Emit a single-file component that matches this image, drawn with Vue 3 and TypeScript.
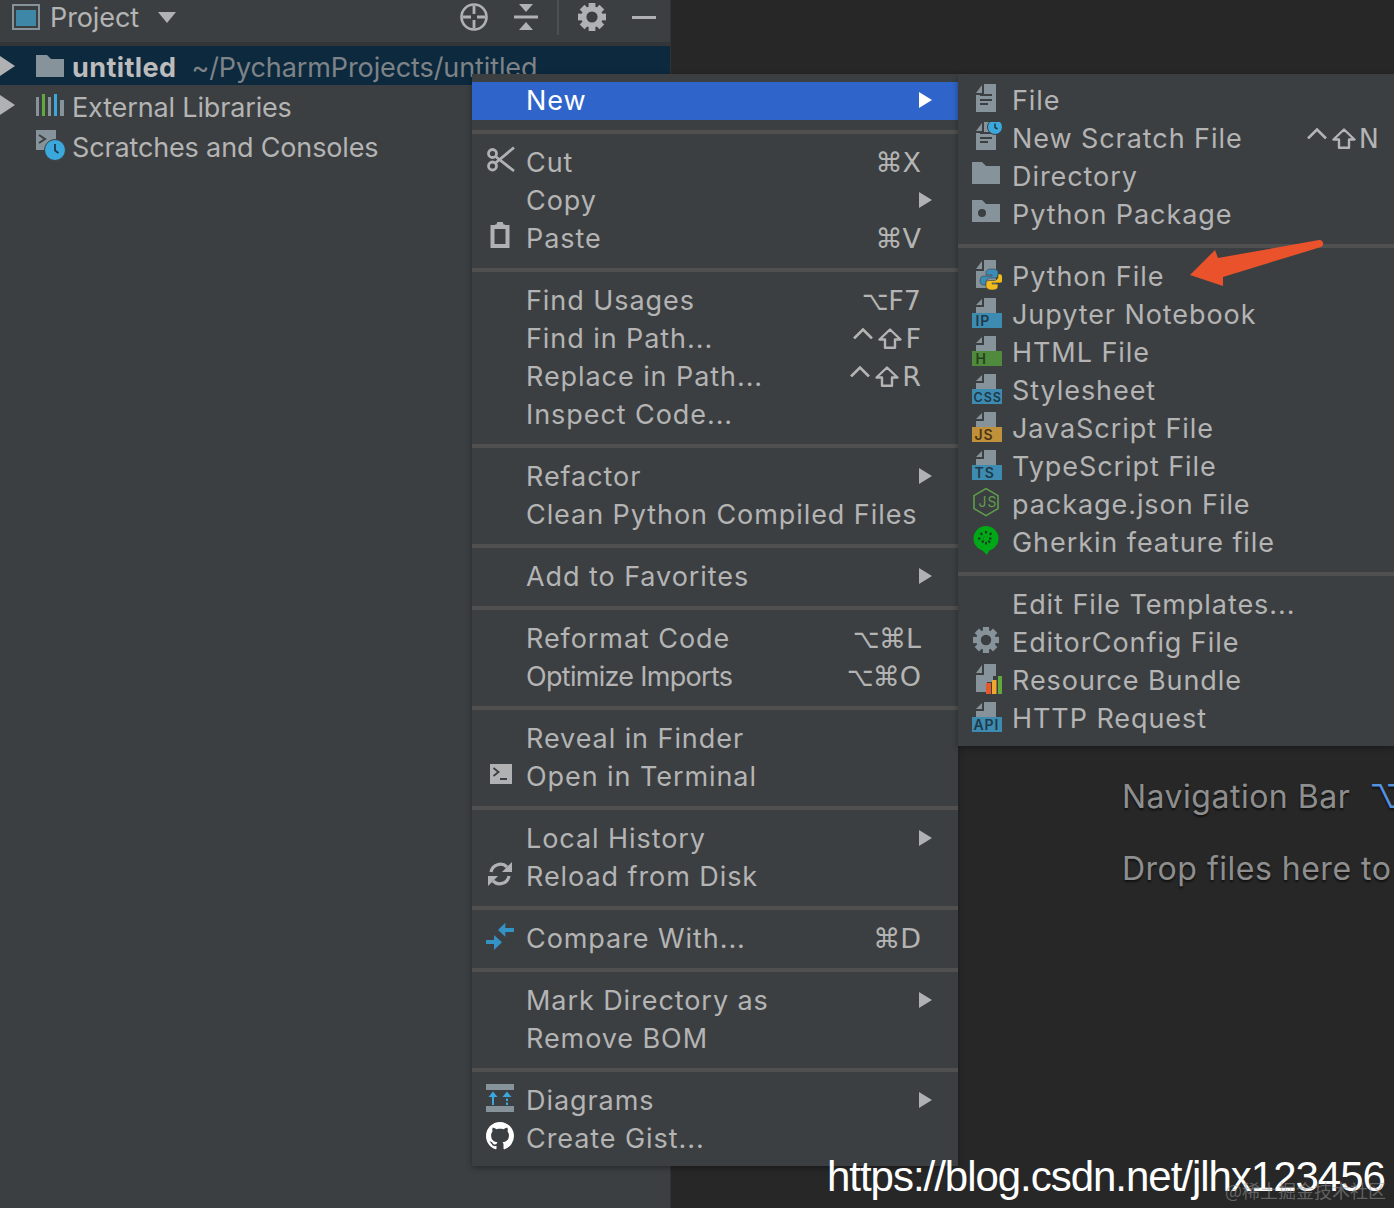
<script setup lang="ts">
interface Item { label: string; icon?: string; key?: string; sub?: boolean; active?: boolean; tight?: boolean }

const fileBody = '<path d="M12 1v8H6z" fill="#87939a"/><path d="M14 0h12v28H6V11h8z" fill="#87939a"/>'
const fileShort = '<path d="M12 1v6H6z" fill="#87939a"/><path d="M14 0h12v15H6v-6h8z" fill="#87939a"/>'
const fileLines = '<path d="M10 11h12M10 16h12M10 20h8" stroke="#3c3f41" stroke-width="2" fill="none"/>'
const badge = (color: string, text: string, x: number, size = 14, ink = '#1f3a4a') =>
  fileShort +
  `<rect x="2" y="15" width="30" height="15" fill="${color}"/><text x="${x}" y="28" font-family="Inter, sans-serif" font-weight="600" font-size="${size}" fill="${ink}">${text}</text>`
const folder = '<path d="M2 2h10l4 4h14v18H2z" fill="#87939a"/>'
const gear = (cx: number, cy: number, r: number, color: string, hole: string) => {
  let teeth = ''
  for (let a = 0; a < 360; a += 45) {
    teeth += `<rect x="${cx - r * 0.24}" y="${cy - r}" width="${r * 0.48}" height="${r * 0.5}" fill="${color}" transform="rotate(${a} ${cx} ${cy})"/>`
  }
  return teeth + `<circle cx="${cx}" cy="${cy}" r="${r * 0.58}" fill="none" stroke="${color}" stroke-width="${r * 0.36}"/><circle cx="${cx}" cy="${cy}" r="${r * 0.34}" fill="${hole}"/>`
}

const icons: Record<string, string> = {
  cut: '<g fill="none" stroke="#afb1b3" stroke-width="2.800"><circle cx="8.500" cy="7.500" r="4"/><circle cx="8.500" cy="20" r="4"/><path d="M11.500 10.500L30 25M11.500 17L30 1.500"/></g>',
  paste: '<path d="M11 3.500h2l1-2.500h4l1 2.500h2" fill="#afb1b3" stroke="#afb1b3" stroke-width="2"/><path d="M8.500 5h15v19h-15z" fill="none" stroke="#afb1b3" stroke-width="4"/>',
  terminal: '<rect x="6" y="4" width="22" height="20" fill="#afb1b3"/><path d="M9.500 8l5 4-5 4M16 19h7" fill="none" stroke="#3c3f41" stroke-width="1.800"/>',
  reload: '<g fill="none" stroke="#afb1b3" stroke-width="3.200"><path d="M7 12a9.500 9.500 0 0 1 16-5"/><path d="M25 16a9.500 9.500 0 0 1-16 5"/></g><path d="M28 2v10H18zM4 26V16h10z" fill="#afb1b3"/>',
  compare: '<g fill="#3592c4"><path d="M21.300.7v14L14 8z"/><path d="M21 6h9v4h-9z"/><path d="M10 13v15l8-7.700z"/><path d="M2 18h8v4H2z"/></g>',
  diagrams: '<path d="M2 0h28v6H2zM2 22h28v6H2z" fill="#87939a"/><path d="M9 21V11" stroke="#3aa8dc" stroke-width="2"/><path d="M4.500 13L9 7.500l4.500 5.500z" fill="#3aa8dc"/><path d="M23 21v-9" stroke="#3aa8dc" stroke-width="2" stroke-dasharray="2.500 1.500"/><path d="M18.500 13L23 7.500l4.500 5.500z" fill="#3aa8dc"/>',
  github: '<path transform="translate(2 0) scale(1.75)" fill="#fff" d="M8 0C3.58 0 0 3.58 0 8c0 3.54 2.29 6.53 5.47 7.59.4.07.55-.17.55-.38 0-.19-.01-.82-.01-1.49-2.01.37-2.53-.49-2.69-.94-.09-.23-.48-.94-.82-1.13-.28-.15-.68-.52-.01-.53.63-.01 1.08.58 1.23.82.72 1.21 1.87.87 2.33.66.07-.52.28-.87.51-1.07-1.78-.2-3.64-.89-3.64-3.95 0-.87.31-1.59.82-2.15-.08-.2-.36-1.02.08-2.12 0 0 .67-.21 2.2.82.64-.18 1.32-.27 2-.27.68 0 1.36.09 2 .27 1.53-1.04 2.2-.82 2.2-.82.44 1.1.16 1.92.08 2.12.51.56.82 1.27.82 2.15 0 3.07-1.87 3.75-3.65 3.95.29.25.54.73.54 1.48 0 1.07-.01 1.93-.01 2.2 0 .21.15.46.55.38A8.013 8.013 0 0016 8c0-4.420-3.580-8-8-8z"/>',
  file: fileBody + fileLines,
  scratch: fileBody + fileLines + '<circle cx="25" cy="5" r="7.500" fill="#3aa8dc" stroke="#3c3f41" stroke-width="1"/><path d="M25 1.500V5.500l2.500 1.500" fill="none" stroke="#21384a" stroke-width="1.500"/>',
  folder,
  package: folder + '<circle cx="12" cy="15" r="4" fill="#3c3f41"/>',
  python: fileBody + '<path d="M22 9c-4 0-6 1-6 4v2h6v1h-8c-3 0-4 2-4 5s2 4 4 4h2v-3c0-2 2-4 4-4h5c2 0 3-1 3-3v-3c0-2-2-3-6-3z" fill="#3c8cb8" stroke="#3c3f41" stroke-width=".6"/><path d="M22 30c4 0 6-1 6-4v-2h-6v-1h8c2 0 3-2 3-4.500S31.500 14 29.500 14H28v3c0 2-2 3.500-4 3.500h-5c-2 0-3 1-3 3V26c0 2 2 4 6 4z" fill="#f0bb1b" stroke="#3c3f41" stroke-width=".6"/>',
  ipynb: badge('#3d8bb0', 'IP', 5.500),
  html: badge('#4f8a3d', 'H', 5.500, 14, '#24421c'),
  css: badge('#3d8bb0', 'CSS', 3.500, 12.500),
  js: badge('#c0903a', 'JS', 4.500, 14, '#4a3513'),
  ts: badge('#3d8bb0', 'TS', 4.500),
  pkg: '<path d="M16 .6l12 7v13l-12 7-12-7v-13z" fill="none" stroke="#5f9c4c" stroke-width="1.600"/><text x="8.500" y="19" font-family="Inter, sans-serif" font-size="14" fill="#5f9c4c">JS</text>',
  gherkin: '<circle cx="16" cy="12.500" r="12.500" fill="#00a818"/><path d="M11 23l6 6 3-6z" fill="#00a818"/><g stroke="#1c3b20" stroke-width="2" stroke-dasharray="2.500 3"><path d="M16 5v16M8 12.500h16M10.500 7l11 11M21.500 7l-11 11"/></g><circle cx="16" cy="12.500" r="2.500" fill="#00a818"/>',
  config: gear(16, 14, 13, '#87939a', '#3c3f41'),
  bundle: '<path d="M12 1v8H6z" fill="#87939a"/><path d="M14 0h12v12h-3v6h-6v10H6V11h8z" fill="#87939a"/><path d="M16 19h5v11h-5z" fill="#e6572a"/><path d="M22 16h4.500v14H22z" fill="#f0a732"/><path d="M28 12h4v18h-4z" fill="#62a83c"/>',
  api: badge('#3d8bb0', 'API', 3.500, 14),
}

const mainGroups: Item[][] = [
  [{ label: 'New', sub: true, active: true }],
  [
    { label: 'Cut', icon: 'cut', key: '⌘X' },
    { label: 'Copy', sub: true },
    { label: 'Paste', icon: 'paste', key: '⌘V' },
  ],
  [
    { label: 'Find Usages', key: '⌥F7' },
    { label: 'Find in Path...', key: '⌃⇧F' },
    { label: 'Replace in Path...', key: '⌃⇧R' },
    { label: 'Inspect Code...' },
  ],
  [{ label: 'Refactor', sub: true }, { label: 'Clean Python Compiled Files' }],
  [{ label: 'Add to Favorites', sub: true }],
  [
    { label: 'Reformat Code', key: '⌥⌘L' },
    { label: 'Optimize Imports', key: '⌥⌘O', tight: true },
  ],
  [{ label: 'Reveal in Finder' }, { label: 'Open in Terminal', icon: 'terminal' }],
  [{ label: 'Local History', sub: true }, { label: 'Reload from Disk', icon: 'reload' }],
  [{ label: 'Compare With...', icon: 'compare', key: '⌘D' }],
  [{ label: 'Mark Directory as', sub: true }, { label: 'Remove BOM' }],
  [
    { label: 'Diagrams', icon: 'diagrams', sub: true },
    { label: 'Create Gist...', icon: 'github' },
  ],
]

const subGroups: Item[][] = [
  [
    { label: 'File', icon: 'file' },
    { label: 'New Scratch File', icon: 'scratch', key: '⌃⇧N' },
    { label: 'Directory', icon: 'folder' },
    { label: 'Python Package', icon: 'package' },
  ],
  [
    { label: 'Python File', icon: 'python' },
    { label: 'Jupyter Notebook', icon: 'ipynb' },
    { label: 'HTML File', icon: 'html' },
    { label: 'Stylesheet', icon: 'css' },
    { label: 'JavaScript File', icon: 'js' },
    { label: 'TypeScript File', icon: 'ts' },
    { label: 'package.json File', icon: 'pkg' },
    { label: 'Gherkin feature file', icon: 'gherkin' },
  ],
  [
    { label: 'Edit File Templates...' },
    { label: 'EditorConfig File', icon: 'config' },
    { label: 'Resource Bundle', icon: 'bundle' },
    { label: 'HTTP Request', icon: 'api' },
  ],
]

const menus = [
  { name: 'main', groups: mainGroups },
  { name: 'sub', groups: subGroups },
]
const headerGear = gear(592, 15, 14, '#afb1b3', '#3c3f41')
</script>

<template>
  <div class="root">
    <aside class="panel">
      <header class="bar">
        <svg class="project-icon" width="28" height="26" viewBox="0 0 28 26">
          <rect x="1" y="1" width="26" height="24" fill="none" stroke="#87939a" stroke-width="2" />
          <rect x="4" y="6" width="20" height="16" fill="#3f87a6" />
        </svg>
        <span class="bar-title">Project</span>
        <svg class="caret" width="18" height="11" viewBox="0 0 18 11"><path d="M0 0h18L9 11z" fill="#afb1b3" /></svg>
        <span class="bar-space"></span>
        <svg class="tool" width="30" height="30" viewBox="0 0 30 30">
          <circle cx="15" cy="15" r="12.500" fill="none" stroke="#afb1b3" stroke-width="2.600" />
          <path d="M15 4v8M15 18v8M4 15h8M18 15h8" stroke="#afb1b3" stroke-width="2.800" />
        </svg>
        <svg class="tool collapse" width="24" height="28" viewBox="0 0 24 28">
          <path d="M5 1h14l-7 8zM5 27h14l-7-8z" fill="#afb1b3" />
          <path d="M0 14h24" stroke="#afb1b3" stroke-width="3" />
        </svg>
        <span class="bar-divider"></span>
        <svg class="tool gear" width="30" height="30" viewBox="577 0 30 30" v-html="headerGear"></svg>
        <span class="minus"></span>
      </header>
      <div class="tree">
        <div class="tree-row selected">
          <svg class="twist" width="15" height="20" viewBox="0 0 15 20"><path d="M0 0l15 10L0 20z" fill="#afb1b3" /></svg>
          <svg class="node-icon" width="28" height="22" viewBox="0 0 28 22"><path d="M0 0h11l4 4h13v18H0z" fill="#87939a" /></svg>
          <span class="node-bold">untitled</span>
          <span class="node-path">~/PycharmProjects/untitled</span>
        </div>
        <div class="tree-row">
          <svg class="twist" width="15" height="20" viewBox="0 0 15 20"><path d="M0 0l15 10L0 20z" fill="#afb1b3" /></svg>
          <svg class="node-icon" width="28" height="22" viewBox="0 0 28 22">
            <path d="M0 3h3v19H0z" fill="#87939a" />
            <path d="M6 0h3v22H6z" fill="#62a83c" />
            <path d="M12 3h3v19h-3z" fill="#87939a" />
            <path d="M18 0h3v22h-3z" fill="#3aa8dc" />
            <path d="M24 6h4v16h-4z" fill="#87939a" />
          </svg>
          <span class="node-text">External Libraries</span>
        </div>
        <div class="tree-row">
          <span class="twist-space"></span>
          <svg class="node-icon scratch" width="30" height="32" viewBox="0 0 30 32">
            <path d="M0 0h20v20H0z" fill="#87939a" />
            <path d="M3 5l6 4-6 4" fill="none" stroke="#3c3f41" stroke-width="2" />
            <circle cx="19" cy="20" r="10.500" fill="#3aa8dc" stroke="#3c3f41" stroke-width="1" />
            <path d="M19 14v6.500l3.500 2.500" fill="none" stroke="#21384a" stroke-width="1.800" />
          </svg>
          <span class="node-text">Scratches and Consoles</span>
        </div>
      </div>
    </aside>

    <main class="editor">
      <p class="hint">Navigation Bar<span class="hint-key">⌥</span></p>
      <p class="hint">Drop files here to</p>
    </main>

    <div v-for="menu in menus" :key="menu.name" class="menu" :class="menu.name">
      <template v-for="(group, g) in menu.groups" :key="g">
        <div v-if="g > 0" class="sep"></div>
        <div v-for="item in group" :key="item.label" class="row" :class="{ active: item.active }">
          <svg v-if="item.icon" class="row-icon" width="32" height="32" viewBox="0 0 32 32" v-html="icons[item.icon]"></svg>
          <span v-else class="row-icon"></span>
          <span class="row-label" :class="{ tight: item.tight }">{{ item.label }}</span>
          <span v-if="item.key" class="row-key">
            <template v-for="(c, i) in item.key" :key="i">
              <svg v-if="c === '⌃'" class="k-ctrl" width="20" height="11" viewBox="0 0 20 11" aria-label="Control"><path d="M1 10.500L10 1.500l9 9" fill="none" stroke="#b4b4b4" stroke-width="2.600" /></svg>
              <svg v-else-if="c === '⇧'" class="k-shift" width="24" height="21" viewBox="0 0 24 21" aria-label="Shift"><path d="M12 1.500L22.500 11.500H17V19.800H7V11.500H1.500z" fill="none" stroke="#b4b4b4" stroke-width="2.400" stroke-linejoin="round" /></svg>
              <span v-else :class="c === '⌥' ? 'k-opt' : 'k-char'">{{ c }}</span>
            </template>
          </span>
          <svg v-if="item.sub" class="row-sub" width="13" height="16" viewBox="0 0 13 16"><path d="M0 0l13 8-13 8z" /></svg>
        </div>
      </template>
    </div>

    <svg class="pointer" width="140" height="50" viewBox="0 0 140 50">
      <path d="M0 35L25 10l3 8 101-18c4-.5 6 5 2 7L33 37l-.0 9z" fill="#e9522a" />
    </svg>

    <div class="mark">https://blog.csdn.net/jlhx123456</div>
    <div class="mark-small">@稀土掘金技术社区</div>
  </div>
</template>

<style scoped>
.root {
  position: relative;
  display: flex;
  width: 1394px;
  height: 1208px;
  overflow: hidden;
  background: #272727;
  font-family: Inter, "DejaVu Sans", sans-serif;
  font-size: 27px;
  color: #b4b4b4;
}
.panel {
  flex: 0 0 671px;
  background: #3c3f41;
  border-right: 1px solid #333;
  box-sizing: border-box;
}
.bar {
  display: flex;
  align-items: center;
  height: 42px;
  padding: 0 14px 8px 12px;
  box-sizing: border-box;
}
.bar-title { margin-left: 10px; letter-spacing: -0.1px; }
.caret { margin-left: 19px; }
.bar-space { flex: 1; }
.tool { flex: none; }
.collapse { margin-left: 25px; }
.bar-divider {
  width: 2px;
  height: 36px;
  margin-left: 19px;
  background: #4d4f51;
}
.gear { margin-left: 18px; }
.minus {
  width: 24px;
  height: 3px;
  margin-left: 25px;
  background: #afb1b3;
}
.tree {
  border-top: 4px solid #333638;
}
.tree-row {
  display: flex;
  align-items: center;
  height: 40px;
  white-space: nowrap;
}
.tree-row.selected { background: #0d293e; height: 39px; }
.twist { flex: none; margin-right: 21px; }
.twist-space { flex: none; width: 36px; }
.node-icon { flex: none; margin-right: 8px; }
.node-icon.scratch { margin-right: 6px; margin-top: 2px; }
.node-bold { font-weight: 700; color: #bcbcbc; letter-spacing: 0.4px; padding-top: 4px; }
.node-path { margin-left: 15px; color: #7d8387; letter-spacing: -0.1px; padding-top: 4px; }
.node-text { letter-spacing: -0.15px; padding-top: 4px; }
.editor {
  flex: 1;
  padding: 772px 0 0 451px;
  white-space: nowrap;
  overflow: hidden;
}
.hint {
  margin: 0 0 22px;
  height: 50px;
  line-height: 50px;
  font-size: 32px;
  letter-spacing: 0.5px;
  color: #8e8e8e;
  text-shadow: 0 2px 2px #111;
}
.hint-key {
  margin-left: 19px;
  color: #5592e0;
}
.menu {
  position: absolute;
  top: 74px;
  padding: 8px 0;
  background: #3c3f41;
  box-shadow: 0 2px 6px rgba(0, 0, 0, 0.35);
  white-space: nowrap;
  letter-spacing: 0.93px;
}
.menu.main { left: 472px; width: 486px; }
.menu.sub { left: 958px; width: 436px; }
.sep {
  height: 4px;
  margin: 10px 0;
  background: #505050;
}
.row {
  display: flex;
  align-items: center;
  box-sizing: border-box;
  height: 38px;
  padding: 0 26px 2px 12px;
}
.row.active { background: #2f65ca; color: #fff; }
.row-icon { flex: none; width: 32px; height: 32px; margin-right: 10px; }
.row-label { flex: 1; }
.row-label.tight { letter-spacing: -0.7px; }
.row-key {
  display: flex;
  align-items: center;
  font-family: "DejaVu Sans", Inter, sans-serif;
  letter-spacing: 0;
  margin-right: 11px;
}
.k-ctrl { flex: none; margin: 0 5px 9px 0; }
.k-shift { flex: none; margin-right: 3px; }
.k-opt { display: inline-block; width: 28px; text-align: center; transform: scaleX(0.85); }
.row-sub { flex: none; fill: #afb1b3; }
.row.active .row-sub { fill: #fff; }
.menu.sub .row { padding-right: 15px; }
.menu.sub .row-key { margin-right: 0; }
.pointer {
  position: absolute;
  left: 1190px;
  top: 240px;
}
.mark {
  position: absolute;
  left: 827px;
  top: 1152px;
  font-family: "Liberation Sans", sans-serif;
  font-size: 42px;
  line-height: 50px;
  letter-spacing: -1.03px;
  color: #fff;
  white-space: nowrap;
}
.mark-small {
  position: absolute;
  left: 1225px;
  top: 1178px;
  font-family: "Noto Sans CJK SC", sans-serif;
  font-size: 18px;
  line-height: 24px;
  color: rgba(150, 150, 150, 0.55);
  white-space: nowrap;
}
</style>
